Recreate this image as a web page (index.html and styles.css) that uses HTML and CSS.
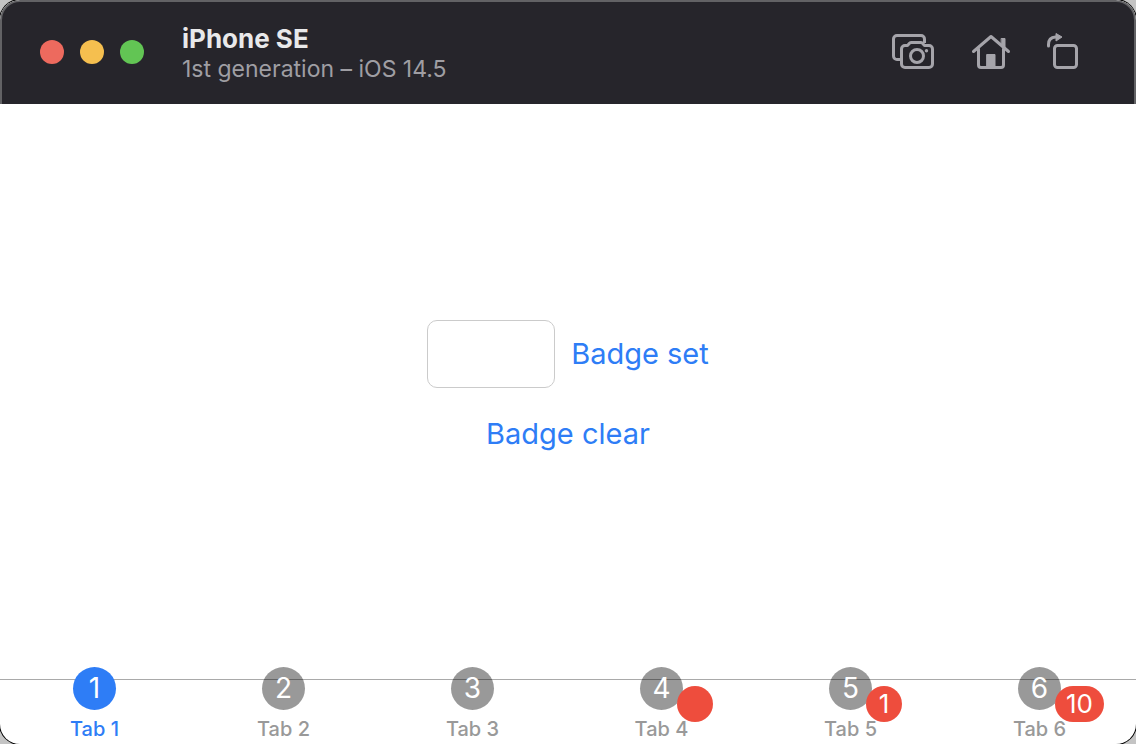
FILE: index.html
```
<!DOCTYPE html>
<html lang="en">
<head>
<meta charset="utf-8">
<meta name="viewport" content="width=device-width, initial-scale=1">
<title>iPhone SE</title>
<link rel="stylesheet" href="styles.css">
</head>
<body>
<div class="window">
  <header class="titlebar">
    <div class="lights">
      <button class="light light-close" aria-label="Close"></button>
      <button class="light light-minimize" aria-label="Minimize"></button>
      <button class="light light-zoom" aria-label="Zoom"></button>
    </div>
    <div class="heading">
      <h1 class="device">iPhone SE</h1>
      <p class="system">1st generation – iOS 14.5</p>
    </div>
    <div class="tools">
      <button class="tool" aria-label="Screenshot">
        <svg width="44" height="40" viewBox="0 0 44 40" fill="none" stroke="currentColor" stroke-width="3" stroke-linejoin="round">
          <path d="M9 27.500H6A3.500 3.500 0 0 1 2.500 24V7A3.500 3.500 0 0 1 6 3.500H30A3.500 3.500 0 0 1 33.500 7V11"/>
          <path d="M14 13.500h2.500l2-2.200q.8-.8 2-.8h9q1.200 0 2 .8l2 2.200H38a3.500 3.500 0 0 1 3.500 3.500V32a3.500 3.500 0 0 1-3.500 3.500H14a3.500 3.500 0 0 1-3.500-3.500V17A3.500 3.500 0 0 1 14 13.500Z"/>
          <circle cx="26" cy="24" r="6.500"/>
          <circle cx="35.500" cy="18.700" r="1.700" fill="currentColor" stroke="none"/>
        </svg>
      </button>
      <button class="tool" aria-label="Home">
        <svg width="44" height="40" viewBox="0 0 44 40" fill="none" stroke="currentColor" stroke-width="3" stroke-linecap="round" stroke-linejoin="round">
          <path d="M4.500 19.500 22 4.500 39.500 19.500"/>
          <path d="M9.500 17V33q0 2.500 2.500 2.500H32q2.500 0 2.500-2.500V17"/>
          <path d="M32.500 6.500h3.500v9.500l-3.500-3Z" fill="currentColor" stroke-width="1"/>
          <path d="M18 22.500h8V35h-8Z" fill="currentColor" stroke-width="1"/>
        </svg>
      </button>
      <button class="tool" aria-label="Rotate">
        <svg width="35" height="40" viewBox="7 0 35 40" fill="none" stroke="currentColor" stroke-width="3">
          <rect x="14.500" y="13.500" width="22" height="22" rx="3"/>
          <path d="M8.500 14V12.500q0-7 7-7.500h1.500" stroke-linecap="round"/>
          <path d="M16 1.500 22 5 16 9Z" fill="currentColor" stroke-width="1" stroke-linejoin="round"/>
        </svg>
      </button>
    </div>
  </header>
  <main class="screen">
    <form class="badge-form">
      <div class="row">
        <input class="field" type="text" aria-label="Badge value">
        <button class="action" type="button">Badge set</button>
      </div>
      <button class="action" type="button">Badge clear</button>
    </form>
  </main>
  <nav class="tabs">
    <button class="tab tab-active"><span class="icon">1</span><span class="label">Tab 1</span></button>
    <button class="tab"><span class="icon">2</span><span class="label">Tab 2</span></button>
    <button class="tab"><span class="icon">3</span><span class="label">Tab 3</span></button>
    <button class="tab"><span class="icon">4<span class="badge"></span></span><span class="label">Tab 4</span></button>
    <button class="tab"><span class="icon">5<span class="badge">1</span></span><span class="label">Tab 5</span></button>
    <button class="tab"><span class="icon">6<span class="badge">10</span></span><span class="label">Tab 6</span></button>
  </nav>
</div>
</body>
</html>
```
FILE: styles.css
```
* {
  box-sizing: border-box;
}

body {
  margin: 0;
  background: #c4c4c4;
  font-family: Inter, "Liberation Sans", sans-serif;
}

button {
  margin: 0;
  padding: 0;
  border: 0;
  background: none;
  color: inherit;
  font: inherit;
}

.window {
  display: flex;
  flex-direction: column;
  min-height: 100vh;
  overflow: hidden;
  border-radius: 20px;
  background: #fff;
  box-shadow: 0 0 0 1px #000;
}

.titlebar {
  display: flex;
  align-items: center;
  height: 104px;
  padding: 0 52px 2px 38px;
  border: 2px solid #626265;
  border-bottom: 0;
  border-radius: 20px 20px 0 0;
  background: #26252b;
}

.lights {
  display: flex;
  gap: 16px;
}

.light {
  width: 24px;
  height: 24px;
  border-radius: 50%;
}

.light-close {
  background: #ed6a5e;
}

.light-minimize {
  background: #f5bf4f;
}

.light-zoom {
  background: #62c554;
}

.heading {
  flex: 1;
  margin-left: 38px;
  padding-top: 4px;
}

.device,
.system {
  margin: 0;
  line-height: 30px;
}

.device {
  color: #e9e9ea;
  font-size: 26px;
  font-weight: 700;
}

.system {
  color: #9f9ea3;
  font-size: 23px;
}

.tools {
  display: flex;
  gap: 34px;
}

.tool {
  color: #a5a4aa;
}

.tool svg {
  display: block;
}

.screen {
  display: flex;
  flex: 1;
  align-items: center;
  justify-content: center;
  padding-bottom: 10px;
}

.badge-form {
  display: flex;
  flex-direction: column;
  align-items: center;
  gap: 27px;
}

.row {
  display: flex;
  align-items: center;
  gap: 16px;
}

.field {
  width: 128px;
  height: 68px;
  padding: 0 14px;
  border: 1px solid #cbcbcb;
  border-radius: 10px;
  background: #fff;
  font: inherit;
  font-size: 28px;
}

.action {
  color: #2e7df6;
  font-size: 29px;
  line-height: 38px;
}

.tabs {
  display: grid;
  grid-template-columns: repeat(6, 1fr);
  padding-right: 2px;
  border-top: 1px solid #a9a9a9;
}

.tab {
  display: flex;
  flex-direction: column;
  align-items: center;
  gap: 7px;
  margin-top: -13px;
  padding-bottom: 3px;
  color: #999;
}

.tab-active {
  color: #2e7df6;
}

.icon {
  position: relative;
  width: 43px;
  height: 43px;
  border-radius: 50%;
  background: rgba(0, 0, 0, 0.4);
  color: #fff;
  font-size: 28px;
  line-height: 43px;
}

.tab-active .icon {
  background: #2e7df6;
}

.label {
  font-size: 20px;
  font-weight: 500;
  line-height: 24px;
}

.badge {
  position: absolute;
  top: 19px;
  left: 37px;
  min-width: 36px;
  height: 36px;
  padding: 0 11px;
  border-radius: 18px;
  background: #ee4d3d;
  font-size: 26px;
  line-height: 36px;
}
```
